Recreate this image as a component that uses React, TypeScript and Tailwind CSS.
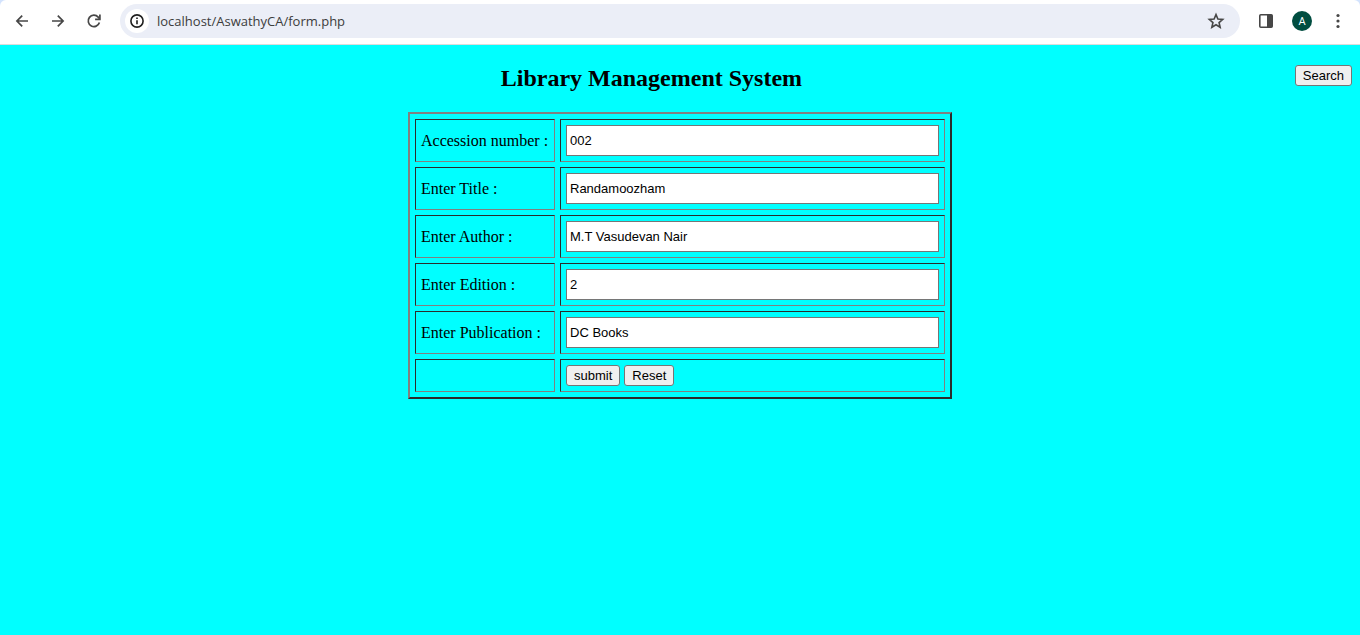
import { useState, type ReactNode } from "react";

const fields = [
  { id: "accession", label: "Accession number :", value: "002" },
  { id: "title", label: "Enter Title :", value: "Randamoozham" },
  { id: "author", label: "Enter Author :", value: "M.T Vasudevan Nair" },
  { id: "edition", label: "Enter Edition :", value: "2" },
  { id: "publication", label: "Enter Publication :", value: "DC Books" },
];

const cell = "border border-t-[#2c2c2c] border-l-[#2c2c2c] border-r-[#808080] border-b-[#808080] p-[5px]";

function FormButton({ type, children }: { type: "button" | "submit" | "reset"; children: ReactNode }) {
  return (
    <button
      type={type}
      className="h-[21px] rounded-[3px] border border-[#767676] bg-[#efefef] px-[7px] font-['Liberation_Sans',Arial,sans-serif] text-[13px] leading-[15px] text-black"
    >
      {children}
    </button>
  );
}

function IconButton({ label, children }: { label: string; children: ReactNode }) {
  return (
    <button type="button" aria-label={label} className="flex size-9 items-center justify-center text-[#474747]">
      {children}
    </button>
  );
}

function Icon({ children }: { children: ReactNode }) {
  return (
    <svg width="20" height="20" viewBox="0 0 20 20" fill="none" stroke="currentColor" strokeWidth="1.7" aria-hidden="true">
      {children}
    </svg>
  );
}

function BrowserBar() {
  const [url, setUrl] = useState("localhost/AswathyCA/form.php");
  return (
    <div className="bg-[#d3e3fd]">
      <header className="flex h-[45px] items-start rounded-t-[6px] border-b border-[#dcdcdc] bg-white px-1 pt-[3px]">
        <IconButton label="Back">
          <Icon><path d="M16 10H5.2M10.2 4.6L4.9 10l5.3 5.4" /></Icon>
        </IconButton>
        <IconButton label="Forward">
          <Icon><path d="M4 10h10.8M9.8 4.6l5.3 5.4-5.3 5.4" /></Icon>
        </IconButton>
        <IconButton label="Reload">
          <Icon>
            <path d="M15.4 11.5A5.7 5.7 0 1 1 14.2 6.1L15.6 7.8" />
            <path d="M15.9 3.6v4.8h-4.8" />
          </Icon>
        </IconButton>
        <div className="mt-px ml-2 flex h-[34px] flex-1 items-center rounded-full bg-[#ebeef7] pl-[5px]">
          <button type="button" aria-label="Site information" className="flex size-6 items-center justify-center rounded-full bg-white text-[#1f1f1f]">
            <Icon>
              <circle cx="10" cy="10" r="6.1" strokeWidth="1.6" />
              <path d="M10 9.2v4M10 6.6v1.5" strokeWidth="1.6" />
            </Icon>
          </button>
          <input
            aria-label="Address"
            value={url}
            onChange={(e) => setUrl(e.target.value)}
            className="ml-2 min-w-0 flex-1 bg-transparent font-['Open_Sans',sans-serif] text-[13px] leading-5 text-[#3c3c3c] outline-none"
          />
          <button type="button" aria-label="Bookmark this tab" className="mr-[14px] flex items-center text-[#474747]">
            <Icon>
              <path d="M10 3.6l1.9 4.4 4.8.4-3.65 3.15 1.1 4.7L10 13.8l-4.15 2.45 1.1-4.7L3.3 8.4l4.8-.4z" strokeWidth="1.6" />
            </Icon>
          </button>
        </div>
        <div className="ml-2 flex">
          <IconButton label="Side panel">
            <Icon>
              <rect x="3.8" y="3.8" width="12.4" height="12.4" rx="1" strokeWidth="1.6" />
              <rect x="11" y="3.8" width="5.2" height="12.4" fill="currentColor" stroke="none" />
            </Icon>
          </IconButton>
          <IconButton label="Profile">
            <span className="flex size-5 items-center justify-center rounded-full bg-[#004d40] font-[Roboto,sans-serif] text-[11px] leading-none text-white">A</span>
          </IconButton>
          <IconButton label="Menu">
            <Icon>
              <g fill="currentColor" stroke="none">
                <circle cx="10" cy="4.5" r="1.6" />
                <circle cx="10" cy="10" r="1.6" />
                <circle cx="10" cy="15.5" r="1.6" />
              </g>
            </Icon>
          </IconButton>
        </div>
      </header>
    </div>
  );
}

export default function App() {
  return (
    <div className="flex min-h-screen flex-col bg-[#00ffff] font-['Liberation_Serif','Times_New_Roman',serif] text-[16px] text-black">
      <BrowserBar />
      <main className="px-2 pt-5">
        <div className="flex items-start">
          <h1 className="flex-1 text-center text-[24px] leading-[27px] font-bold">Library Management System</h1>
          <FormButton type="button">Search</FormButton>
        </div>
        <form className="mt-5" onSubmit={(e) => e.preventDefault()}>
          <table className="mx-auto w-2/5 min-w-[544px] border-separate border-spacing-[5px] border-2 border-t-[#808080] border-r-[#2c2c2c] border-b-[#2c2c2c] border-l-[#808080] leading-[18px]">
            <tbody>
              {fields.map((field) => (
                <tr key={field.id}>
                  <td className={`${cell} w-[140px] whitespace-nowrap`}>
                    <label htmlFor={field.id}>{field.label}</label>
                  </td>
                  <td className={cell}>
                    <input
                      id={field.id}
                      name={field.id}
                      defaultValue={field.value}
                      className="block h-[31px] w-full border border-[#767676] bg-white px-[3px] font-['Liberation_Sans',Arial,sans-serif] text-[13px]"
                    />
                  </td>
                </tr>
              ))}
              <tr>
                <td className={cell} />
                <td className={cell}>
                  <div className="flex gap-1">
                    <FormButton type="submit">submit</FormButton>
                    <FormButton type="reset">Reset</FormButton>
                  </div>
                </td>
              </tr>
            </tbody>
          </table>
        </form>
      </main>
    </div>
  );
}
